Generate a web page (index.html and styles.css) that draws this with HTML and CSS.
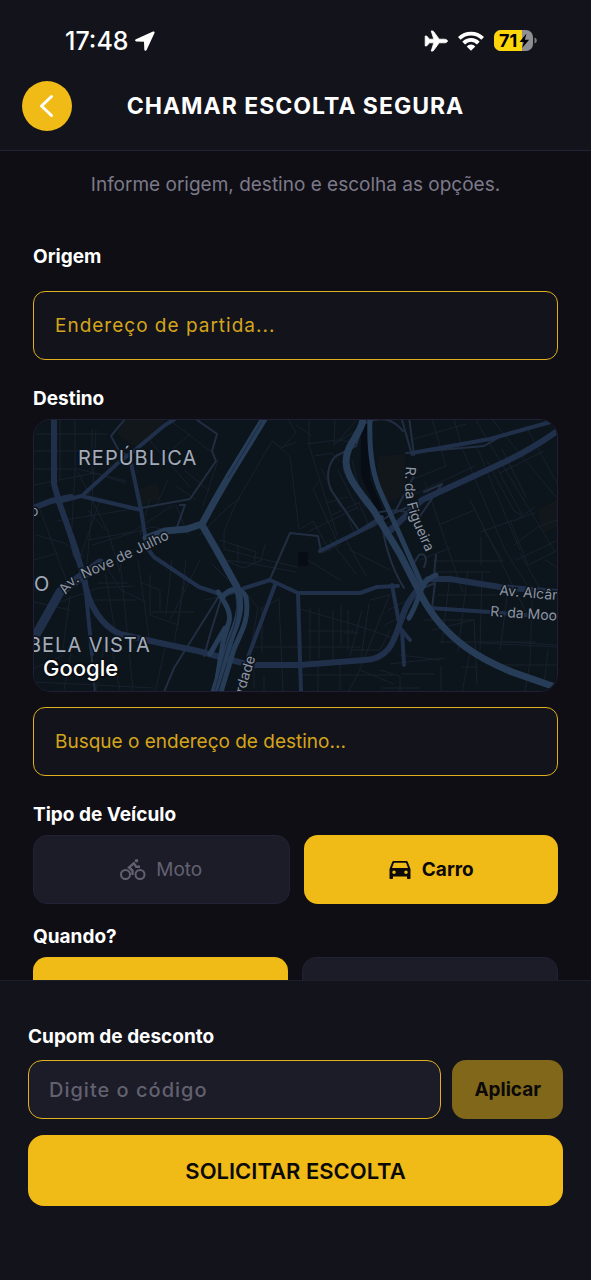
FILE: index.html
```html
<!DOCTYPE html>
<html lang="pt-BR">
<head>
  <meta charset="UTF-8">
  <meta name="viewport" content="width=device-width, initial-scale=1.0">
  <title>Chamar Escolta Segura</title>
  <link rel="stylesheet" href="styles.css">
</head>
<body>

  <header class="header">
    <div class="status-bar">
      <div class="status-time">
        <span>17:48</span>
        <svg width="20" height="20" viewBox="0 0 20 20" fill="#fff"><path d="M18 .6.9 8.2C-.4 8.9 0 10.300 1.300 10.400L9 10.700l.3 7.700c.1 1.400 1.700 1.700 2.300.5L19.500 2C19.900 1 19 .2 18 .6Z"/></svg>
      </div>
      <div class="status-icons">
        <svg width="24" height="22" viewBox="0 0 24 22" fill="#fff"><path d="M23.500 11c0 1-1.500 1.800-3 1.800h-5.300L9.500 20.600c-.3.400-.6.500-1 .5H7.200l2.600-8.300H5.400l-2.200 2.700c-.3.300-.5.400-.9.400H1.200V6h1.100c.4 0 .6.100.9.500l2.200 2.700h4.400L7.200.9h1.300c.4 0 .7.100 1 .5l5.700 7.800h5.300c1.500 0 3 .8 3 1.800Z" stroke="#fff" stroke-width=".8"/></svg>
        <svg width="26" height="20" viewBox="0 0 26 20" fill="none" stroke="#fff" stroke-width="3.800"><path d="M1.300 7.400a16.500 16.500 0 0 1 23.400 0"/><path d="M5.700 12.100a10 10 0 0 1 14.600 0"/><path d="M13 19.800 8.700 15.500a5.800 5.800 0 0 1 8.600 0Z" fill="#fff" stroke="none"/></svg>
        <svg width="43" height="22" viewBox="0 0 43 22">
          <clipPath id="battery"><rect width="39" height="21" rx="7"/></clipPath>
          <g clip-path="url(#battery)"><path fill="#8e8e93" d="M0 0h39v21H0z"/><path fill="#fdd60a" d="M0 0h28v21H0z"/></g>
          <path d="M40.500 7.500c3 .8 3 5.200 0 6Z" fill="#7b7b80"/>
          <text class="battery-text" x="5" y="17">71</text>
          <path d="M32.500 3.500 25.500 12h4.300l-1.700 6 7-8.300h-4.300Z"/>
        </svg>
      </div>
    </div>
    <div class="title-bar">
      <button class="back" type="button" aria-label="Voltar">
        <svg width="16" height="24" viewBox="0 0 16 24" fill="none" stroke="#fff" stroke-width="3" stroke-linecap="round" stroke-linejoin="round"><path d="M12.500 2.500 2.500 12l10 9.500"/></svg>
      </button>
      <h1>CHAMAR ESCOLTA SEGURA</h1>
    </div>
  </header>

  <main class="content">
    <p class="subtitle">Informe origem, destino e escolha as opções.</p>

    <label class="label label-origin" for="origem">Origem</label>
    <input class="field spaced" type="text" id="origem" placeholder="Endereço de partida...">

    <label class="label" for="destino">Destino</label>
    <div class="map">
      <svg viewBox="34 420 523 271" preserveAspectRatio="xMidYMid slice" role="img" aria-label="Mapa">
        <rect x="33" y="419" width="525" height="274" fill="#0c141c"/>

        <!-- parques -->
        <path fill="#11171a" d="M125 419h40l-12 22-20 5-16-12ZM136 490l22-8 2 18-20 6ZM378 456l27-2v42l-18 6-10-22ZM537 510l20-11v28l-14 6Z"/>
        <path fill="#080d15" d="M361 419h6l3 60 18 42-8-3-19-42ZM298 552h10v14h-10Z"/>

        <!-- ruas locais -->
        <g class="street">
          <path d="M34 434h73M34 451h64M34 469h44l48 12M60 419v60M75 419v53l-4 70M92 430v44M34 485l60-12 32 10M40 510l30 80M57 521l76-12M96 430l-5 90-6 65M78 472l30 60 12 40M92 545l60-18 30 6M100 500l-20 58M36 535l28 8 20 14M34 560l24-7M106 566l15 24 25 12M88 540l44-8 40-26"/>
          <path d="M168 419l45 34M150 441l40 46M160 460l30-26M168 480l-12 26M184 470l24 20M140 535l10-36M196 500l-20-14M176 505l12 30M105 530l-17-20"/>
          <path d="M34 602l36 8M60 602l38-14 36-2M70 596l-8 60-28 12M104 565l12 72M120 560l13 130M138 560l12 84M150 575v40l28 10 8-65M94 600h42M98 583h30M172 560l-6 54M152 612h42M34 682l120 6M104 645l-8 47M112 650l8 40M186 574l-12 70M160 610v-20l-20-8M64 690l8-42M200 560l-30 60M165 648l-10 44"/>
          <path d="M288 419l8 14-14 15-10-7-36 62-12 28v18l38 10 35 8M273 441l17 16 9 72M296 425l15 10M309 419v26l28 90M307 444l30-4 15 2M281 448l15-6M335 419l-1 27M315 456l16-3 8 7M321 468l20 40M326 503l21-6M332 515l28-13M320 480l-7 9 24 52M301 529l12-8 17 30M308 532l50-25M338 470l20 40M342 468l24 40M346 465l20 36M352 460l7 28M346 510l9 26M359 503l11 25M339 440l20-23M347 448l20-32M334 444l22-13"/>
          <path d="M220 540l36 12-2 12 42 8M238 545v18M265 545l-4 15M218 460l-15 46M200 535l28-28 12-9M224 560l20 8 18-8M205 600l28-6M244 590l14 18-8 45M225 560l30 4M228 580l-16-16"/>
          <path d="M300 609l56 16 40 14M250 647h110M254 660v28M262 652v-45M279 600l4 91M310 608v58M319 608v50M333 610v50M341 645v-40M348 610v40M308 631h46M362 610l-12 46M369 604l-9 60M300 675h94M264 675v17M318 665v27M340 665v25M350 650h30l10-20M370 600l20-5M344 633h14M390 594l-32 80-10 18M360 670l34 14M280 598l-20 12M330 540l26 34M346 540l20 36M308 560l32 20M350 550l40 20M322 553l18-8"/>
          <path d="M432 419l14 47-35 14M454 419l8 29 43 102 25 40M475 419l80 133M492 419l14 18 50 60M525 425l33 60M410 440l56-16M425 482l38 110M415 494l60-28M478 450l42 100M498 470l24 45-8-4-27-50M441 524l34-14M470 500l60 120M480 532l55-19M481 537v28M514 545l24-18 19-7M535 507l-20 14M526 497l-24-48M500 473l44-22M420 560l30-12M516 560l42-20M520 553l25 45"/>
          <path d="M433 561h70l-20-32M435 572h55M438 595h70M424 620h50l3 65M450 575l-8 68M468 570l-10 82M482 572l-2 78M508 590l-8 60M532 600l-2 62-5 30M432 630l42-10M440 642h95M480 643l78 4M470 652l-8 40M496 665h62M400 655l40 5M390 664l55-6M382 688h37M402 674h32M441 692v-26M462 667h15M506 642l50 3M388 610l20-10M385 625l20-10M400 692v-16l-20-6M510 520l18 45 28-14M545 560l13 8M548 650l-4 35"/>
        </g>

        <!-- ruas coletoras -->
        <g class="collector">
          <path d="M125 419l-14 17 7 13 14 10M197 420l20 14-5 17 4 10-26 38-49 9M180 505h5l-8 22M270 579l20-46 28 3 3 15 54-26 15-10 20-9"/>
          <path d="M360 532l-29-42c-6-14-2-28 5-34l20-10 7-22 10-4M402 420l10 35M414 455l-5-38M369 421c14-4 24-2 34 10M380 512c20-4 30 1 36 3M395 512l22-42M382 520c1 18 8 46 22 68M410 512l-24 18M424 492l18-8-24 35M406 453l78-7 14-8M434 575l2-20M414 563l5-8c6-3 9 3 5 12M418 590l17-7-3 25"/>
          <path d="M66 523l8 32 12 24M219 596l-45 72-10 24M222 596l-10 32-8 28M90 640l5 52"/>
        </g>

        <!-- avenidas -->
        <g class="avenue" stroke-width="4">
          <path d="M84 494l34-31 17-13 30-25 10-6M131 463l10 47 6 38 7 9 45 30 24 8 47-15 28 13h62l17-6 21-1M275 585l-27 72M298 593l3 99M141 510l-60-14-23 6"/>
          <path d="M412 453l78-14 64-18M320 551l40-20 22-14"/>
          <path d="M430 608l60 4 68 6M402 630l2 35M392 585l8 43 10 12M84 574l3 30 5 50"/>
        </g>
        <g class="avenue" stroke-width="6">
          <path d="M54 419v65l5 18 17 48 8 28c4 28 18 48 36 56l40 9 38 8 52 14h50l65-5c28-1 30-26 37-42 4-15 14-28 26-39h22l50 8 58 5M33 508l18-7 20-4"/>
          <path d="M556 432c-20 14-35 23-60 34l-48 22-26 12-31 30"/>
        </g>
        <path class="avenue" stroke-width="9" d="M33 640l27-48 40-29"/>

        <!-- vias expressas -->
        <g class="highway" stroke-width="7">
          <path d="M264 419l-35 57-15 26-12 22-15 5-22 2-19 7"/>
          <path d="M202 525l14 24 21 38c6 18 1 34-5 48l-18 57"/>
          <path d="M363 420c-3 16-17 24-17 42 1 17 15 31 28 49l26 43 22 43c24 45 63 64 90 75l46 16"/>
        </g>
        <g class="highway" stroke-width="5">
          <path d="M370 419c-1 28 1 53 11 74l19 42 22 50M223 597c6-10 18-10 23 0 4 24-6 37-12 52l-13 43M218 592c9 14 13 20 11 30l-6 20-8 50M225 628l-15 26M436 575c-18 7-14 22-27 43"/>
        </g>
        <path d="M262 421l-34 57M236 598c3 20-3 32-9 48l-12 44" fill="none" stroke="#1d2b42"/>

        <!-- rótulos -->
        <path id="nove-julho" fill="none" d="M66 595c9-16 27-19 45-28l62-30"/>
        <path id="figueira" fill="none" d="M406 466c-4 40 4 51 24 95"/>
        <path id="liberdade" fill="none" d="M244 694l14-44"/>
        <g class="district">
          <text x="78" y="465">REPÚBLICA</text>
          <text x="28" y="652">BELA VISTA</text>
          <text x="34" y="591">O</text>
        </g>
        <g class="road-name">
          <text x="30" y="516">o</text>
          <text><textPath href="#nove-julho">Av. Nove de Julho</textPath></text>
          <text><textPath href="#figueira">R. da Figueira</textPath></text>
          <text><textPath href="#liberdade">rdade</textPath></text>
          <text transform="translate(499 595) rotate(5)">Av. Alcântara</text>
          <text transform="translate(490 616) rotate(4)">R. da Mooca</text>
        </g>
        <text class="google" x="43" y="676">Google</text>
      </svg>
    </div>
    <input class="field" type="text" id="destino" placeholder="Busque o endereço de destino...">

    <h2 class="label">Tipo de Veículo</h2>
    <div class="options">
      <button class="option" type="button">
        <svg width="26" height="24" viewBox="0 0 26 24" fill="none" stroke="currentColor" stroke-width="2"><circle cx="5.500" cy="16.500" r="4.500"/><circle cx="20" cy="16.500" r="4.500"/><circle cx="16.500" cy="2.800" r="1.800" fill="currentColor" stroke="none"/><path d="M12.500 17v-4.500L9 9.500l4.800-4.300 2.400 3.600H20" stroke-width="2.400"/></svg>
        Moto
      </button>
      <button class="option active" type="button">
        <svg width="24" height="24" viewBox="0 0 24 24" fill="currentColor"><path fill-rule="evenodd" d="M19.900 4.200C19.600 3.300 18.900 3 18 3H6c-.9 0-1.600.3-1.900 1.200L1.500 11v9c0 .6.400 1 1 1H4c.6 0 1-.4 1-1v-1.500h14V20c0 .6.400 1 1 1h1.500c.6 0 1-.4 1-1v-9ZM6 16a1.700 1.700 0 1 1 0-3.500A1.700 1.700 0 0 1 6 16Zm12 0a1.700 1.700 0 1 1 0-3.500 1.700 1.700 0 0 1 0 3.500ZM4 10l2-5.200h12L20 10Z"/></svg>
        Carro
      </button>
    </div>

    <h2 class="label label-when">Quando?</h2>
    <div class="options">
      <button class="option active" type="button">
        <svg width="24" height="24" viewBox="0 0 24 24" fill="currentColor"><path d="M15 0 4 14h7l-2 10 11-14h-7Z"/></svg>
        Agora
      </button>
      <button class="option" type="button">
        <svg width="24" height="24" viewBox="0 0 24 24" fill="none" stroke="currentColor" stroke-width="2"><path d="M3 4h18v18H3ZM3 9h18M7 1v4M17 1v4"/></svg>
        Agendar
      </button>
    </div>
  </main>

  <footer class="footer">
    <label class="label" for="cupom">Cupom de desconto</label>
    <div class="coupon">
      <input class="field coupon-field spaced" type="text" id="cupom" placeholder="Digite o código">
      <button class="apply" type="button">Aplicar</button>
    </div>
    <button class="submit" type="button">SOLICITAR ESCOLTA</button>
  </footer>

</body>
</html>
```
FILE: styles.css
```css
* {
  box-sizing: border-box;
}

body {
  margin: 0;
  height: 100vh;
  display: flex;
  flex-direction: column;
  overflow: hidden;
  font-family: Inter, "Liberation Sans", sans-serif;
  font-size: 19px;
  line-height: 24px;
  background-color: #0f0e14;
  color: #fff;
}

button,
input {
  font: inherit;
}

button {
  border: none;
  padding: 0;
  cursor: pointer;
}

svg {
  display: block;
}

/* topo */
.header {
  flex: none;
  background-color: #13131b;
  border-bottom: 1px solid #232234;
}

.status-bar {
  display: flex;
  align-items: center;
  justify-content: space-between;
  height: 81px;
  padding: 0 54px 0 65px;
}

.status-time {
  display: flex;
  align-items: center;
  gap: 6px;
  font-size: 25px;
  font-weight: 500;
}

.status-icons {
  display: flex;
  align-items: center;
  gap: 10px;
}

.battery-text {
  font-size: 18px;
  font-weight: 700;
}

.title-bar {
  display: grid;
  grid-template-columns: 50px 1fr 50px;
  align-items: center;
  padding: 0 22px 19px;
}

.back {
  display: flex;
  align-items: center;
  justify-content: center;
  width: 50px;
  height: 50px;
  border-radius: 50%;
  background-color: #f0ba17;
}

h1 {
  margin: 0;
  font-size: 23px;
  font-weight: 700;
  letter-spacing: 1px;
  text-align: center;
}

/* conteúdo */
.content {
  flex: 1;
  min-height: 0;
  overflow: hidden;
  padding: 22px 33px 0;
}

.subtitle {
  margin: 0 0 48px;
  text-align: center;
  color: #7c7a8a;
}

.label {
  display: block;
  margin: 27px 0 8px;
  font-size: 19px;
  font-weight: 700;
}

.label-origin {
  margin: 0 0 22px;
}

.label-when {
  margin-top: 21px;
}

.field {
  display: block;
  width: 100%;
  height: 69px;
  padding: 0 21px;
  border: 1px solid #e0b01f;
  border-radius: 12px;
  background-color: #13131b;
  color: #f0ba17;
}

.field::placeholder {
  color: #d4a51c;
  opacity: 1;
}

.spaced {
  letter-spacing: 1px;
}

.map {
  margin-bottom: 15px;
  border: 1px solid #211f36;
  border-radius: 18px;
  overflow: hidden;
}

.map svg {
  width: 100%;
}

.street,
.collector,
.avenue,
.highway {
  fill: none;
  stroke-linecap: round;
  stroke-linejoin: round;
}

.street {
  stroke: #18212d;
}

.collector {
  stroke: #212e42;
  stroke-width: 2;
}

.avenue {
  stroke: #20304b;
}

.highway {
  stroke: #273c57;
}

.district {
  font-size: 20px;
  letter-spacing: 1px;
  fill: #a3abb9;
}

.road-name {
  font-size: 14px;
  fill: #8d95a3;
}

.district,
.road-name {
  stroke: #0c141c;
  stroke-width: 3px;
  paint-order: stroke;
}

.google {
  font-size: 22px;
  font-weight: 500;
  fill: #fff;
  stroke: #0a0d12;
  stroke-width: 3px;
  paint-order: stroke;
}

.options {
  display: flex;
  gap: 14px;
}

.option {
  box-sizing: content-box;
  flex: 1 1 0;
  display: flex;
  align-items: center;
  justify-content: center;
  gap: 10px;
  height: 67px;
  border: 1px solid #232135;
  border-radius: 14px;
  background-color: #1c1b28;
  color: #626170;
}

.option.active {
  height: 69px;
  border: none;
  background-color: #f0ba17;
  color: #0b0a08;
  font-weight: 700;
}

/* rodapé */
.footer {
  flex: none;
  padding: 44px 28px 74px;
  border-top: 1px solid #1e1d2c;
  background-color: #13131b;
}

.footer .label {
  margin: 0 0 11px;
}

.coupon {
  display: flex;
  gap: 11px;
  margin-bottom: 16px;
}

.coupon-field {
  flex: 1;
  min-width: 0;
  height: 59px;
  padding: 0 20px;
  border-radius: 14px;
  background-color: #1c1b28;
  font-size: 20px;
  font-weight: 500;
}

.coupon-field::placeholder {
  color: #62616f;
}

.apply {
  padding: 0 22px;
  border-radius: 14px;
  background-color: #80671a;
  color: #0b0a08;
  font-weight: 700;
}

.submit {
  display: block;
  width: 100%;
  height: 71px;
  border-radius: 16px;
  background-color: #f0ba17;
  color: #0b0a08;
  font-size: 22px;
  font-weight: 600;
}
```
